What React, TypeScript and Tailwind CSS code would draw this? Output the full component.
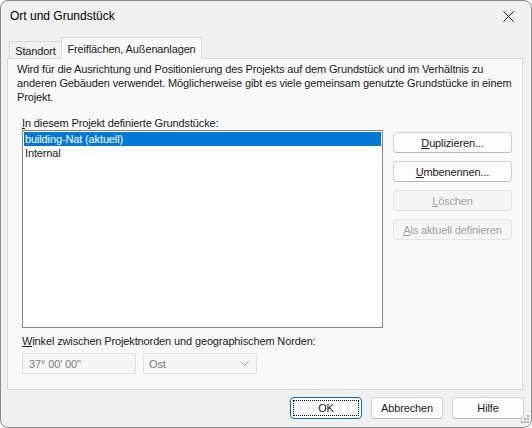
import React from "react";

const font = { fontFamily: '"Liberation Sans", Arial, sans-serif' };

function SideButton({ children, disabled }: { children: React.ReactNode; disabled?: boolean }) {
  return (
    <div
      className={
        "h-[21px] w-[119px] rounded-[4px] border flex items-center justify-center whitespace-nowrap " +
        (disabled
          ? "bg-[#f5f5f5] border-[#e5e5e5] text-[#a0a0a0]"
          : "bg-[#fdfdfd] border-[#d0d0d0] border-b-[#b8b8b8] text-[#1a1a1a]")
      }
    >
      {children}
    </div>
  );
}

function FooterButton({ children, primary }: { children: React.ReactNode; primary?: boolean }) {
  return (
    <div
      className={
        "h-[22px] w-[72px] rounded-[4px] border flex items-center justify-center bg-[#fdfdfd] " +
        (primary ? "border-[#0067c0] p-[2px]" : "border-[#d0d0d0] border-b-[#b8b8b8]")
      }
    >
      {primary ? (
        <div className="w-full h-full border border-dotted border-black flex items-center justify-center">
          {children}
        </div>
      ) : (
        children
      )}
    </div>
  );
}

export default function App() {
  return (
    <div
      className="w-[532px] h-[428px] bg-[#f0f0f0] border border-[#8a8a8a] rounded-[8px] overflow-hidden text-[11px] tracking-[-0.13px] leading-[14px] text-[#1a1a1a] flex flex-col relative"
      style={font}
    >
      {/* Title bar */}
      <div className="h-[30px] flex items-center justify-between pl-[9px] pr-[17px]">
        <span className="text-[12px] tracking-normal text-black">Ort und Grundstück</span>
        <svg width="11" height="11" viewBox="0 0 11 11">
          <path d="M0.5 0.5 L10.5 10.5 M10.5 0.5 L0.5 10.5" stroke="#1a1a1a" strokeWidth="1" />
        </svg>
      </div>

      {/* Tabs */}
      <div className="h-[28px] pt-[6px] pl-[8px] flex items-end whitespace-nowrap">
        <div className="h-[18px] w-[52px] border border-r-0 border-b-0 border-[#d9d9d9] bg-[#f0f0f0] flex items-center justify-center">
          Standort
        </div>
        <div className="relative z-10 h-[22px] w-[141px] border border-b-0 border-[#d9d9d9] bg-[#f9f9f9] flex items-center justify-center">
          Freiflächen, Außenanlagen
        </div>
      </div>

      {/* Panel */}
      <div className="ml-[6px] -mt-px w-[516px] h-[332px] border border-[#d9d9d9] bg-[#f9f9f9] flex flex-col">
        <div className="pl-[9px] pt-[3px] whitespace-nowrap">
          Wird für die Ausrichtung und Positionierung des Projekts auf dem Grundstück und im Verhältnis zu
          <br />
          anderen Gebäuden verwendet. Möglicherweise gibt es viele gemeinsam genutzte Grundstücke in einem
          <br />
          Projekt.
        </div>

        <div className="pl-[14px] mt-[12px]">
          <u>I</u>n diesem Projekt definierte Grundstücke:
        </div>

        <div className="pl-[14px] flex gap-[10px]">
          <div className="w-[361px] h-[198px] border border-[#848484] bg-white p-[1px]">
            <div className="h-[14px] bg-[#0078d7] text-white pl-[1px] leading-[14px]">building-Nat (aktuell)</div>
            <div className="h-[14px] pl-[1px] leading-[14px]">Internal</div>
          </div>
          <div className="pt-[2px] flex flex-col gap-[8px]">
            <SideButton>
              <span>
                <u>D</u>uplizieren...
              </span>
            </SideButton>
            <SideButton>
              <span>
                <u>U</u>mbenennen...
              </span>
            </SideButton>
            <SideButton disabled>
              <span>
                <u>L</u>öschen
              </span>
            </SideButton>
            <SideButton disabled>
              <span>
                <u>A</u>ls aktuell definieren
              </span>
            </SideButton>
          </div>
        </div>

        <div className="pl-[14px] mt-[6px]">
          <u>W</u>inkel zwischen Projektnorden und geographischem Norden:
        </div>

        <div className="pl-[14px] mt-[5px] flex gap-[7px]">
          <div className="w-[114px] h-[21px] border border-[#e0e0e0] bg-[#f5f5f5] text-[#7a7a7a] flex items-center pl-[6px]">
            37° 00' 00"
          </div>
          <div className="w-[114px] h-[21px] border border-[#e0e0e0] bg-[#f5f5f5] text-[#7a7a7a] flex items-center justify-between pl-[5px] pr-[7px]">
            <span>Ost</span>
            <svg width="9" height="5" viewBox="0 0 9 5">
              <path d="M0.5 0.5 L4.5 4.5 L8.5 0.5" fill="none" stroke="#a8a8a8" strokeWidth="1" />
            </svg>
          </div>
        </div>
      </div>

      {/* Footer */}
      <div className="mt-[7px] pr-[7px] flex justify-end gap-[9px]">
        <FooterButton primary>OK</FooterButton>
        <FooterButton>Abbrechen</FooterButton>
        <FooterButton>Hilfe</FooterButton>
      </div>

      {/* Size grip */}
      <svg className="absolute right-[2px] bottom-[2px]" width="10" height="10" viewBox="0 0 10 10">
        <g fill="#b0b0b0">
          <rect x="8" y="0" width="2" height="2" />
          <rect x="5" y="3" width="2" height="2" />
          <rect x="8" y="3" width="2" height="2" />
          <rect x="2" y="6" width="2" height="2" />
          <rect x="5" y="6" width="2" height="2" />
          <rect x="8" y="6" width="2" height="2" />
        </g>
      </svg>
    </div>
  );
}
